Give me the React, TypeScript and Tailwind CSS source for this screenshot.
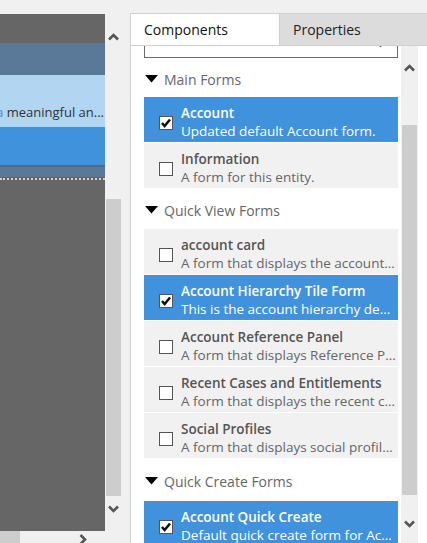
import type { ReactNode } from 'react';

const FONT = { fontFamily: '"Open Sans", "Noto Sans", Arial, sans-serif' };

type Form = { title: string; desc: string; checked?: boolean };

const mainForms: Form[] = [
  { title: 'Account', desc: 'Updated default Account form.', checked: true },
  { title: 'Information', desc: 'A form for this entity.' },
];

const quickView: Form[] = [
  { title: 'account card', desc: 'A form that displays the account information' },
  { title: 'Account Hierarchy Tile Form', desc: 'This is the account hierarchy definition form', checked: true },
  { title: 'Account Reference Panel', desc: 'A form that displays Reference Panel information' },
  { title: 'Recent Cases and Entitlements', desc: 'A form that displays the recent cases' },
  { title: 'Social Profiles', desc: 'A form that displays social profiles' },
];

const quickCreate: Form[] = [
  { title: 'Account Quick Create', desc: 'Default quick create form for Account', checked: true },
];

function Chevron({ dir }: { dir: 'up' | 'down' | 'right' }) {
  if (dir === 'right') {
    return (
      <svg width="8" height="11" viewBox="0 0 8 11">
        <path d="M1.5 1 L6 5.5 L1.5 10" fill="none" stroke="#555" strokeWidth="2.6" />
      </svg>
    );
  }
  return (
    <svg width="11" height="8" viewBox="0 0 11 8">
      <path
        d={dir === 'up' ? 'M1 6.5 L5.5 2 L10 6.5' : 'M1 1.5 L5.5 6 L10 1.5'}
        fill="none"
        stroke="#555"
        strokeWidth="2.6"
      />
    </svg>
  );
}

function Checkbox({ checked }: { checked?: boolean }) {
  return (
    <div className="flex h-[14px] w-[14px] shrink-0 items-center justify-center border border-[#555] bg-white">
      {checked && (
        <svg width="12" height="12" viewBox="0 0 12 12">
          <path d="M2 6 L4.6 9 L10 2.5" fill="none" stroke="#111" strokeWidth="2.5" />
        </svg>
      )}
    </div>
  );
}

function Row({ form }: { form: Form }) {
  return (
    <div
      className={
        form.checked
          ? 'mb-px flex h-[45px] shrink-0 items-start bg-[#4192dc] pl-[15px] pr-[2px]'
          : 'mb-px flex h-[45px] shrink-0 items-start bg-[#f1f1f1] pl-[15px] pr-[2px]'
      }
    >
      <div className="mt-[19px]">
        <Checkbox checked={form.checked} />
      </div>
      <div className="ml-[8px] min-w-0 flex-1 pt-[7px]">
        <div
          className={
            form.checked
              ? 'truncate text-[13.5px] leading-[18px] font-semibold text-white'
              : 'truncate text-[13.5px] leading-[18px] font-semibold text-[#555]'
          }
        >
          {form.title}
        </div>
        <div
          className={
            form.checked
              ? 'truncate text-[13.5px] leading-[18px] text-white'
              : 'truncate text-[13.5px] leading-[18px] text-[#666]'
          }
        >
          {form.desc}
        </div>
      </div>
    </div>
  );
}

function Section({ label, gap, children }: { label: string; gap: string; children: ReactNode }) {
  return (
    <>
      <div className={`flex h-[20px] shrink-0 items-center ${gap}`}>
        <svg width="13" height="8" viewBox="0 0 13 8" className="ml-px">
          <polygon points="0,0 13,0 6.5,7.5" fill="#000" />
        </svg>
        <span className="ml-[6px] text-[14px] text-[#666]">{label}</span>
      </div>
      {children}
    </>
  );
}

export default function App() {
  return (
    <div className="flex h-[543px] w-[427px] flex-col overflow-hidden bg-[#f0f0f0]" style={FONT}>
      <div className="h-[13px] shrink-0" />
      <div className="flex min-h-0 flex-1">
        {/* left designer canvas */}
        <div className="flex w-[130px] shrink-0 flex-col">
          <div className="flex min-h-0 flex-1 pt-px">
            <div className="flex w-[105px] flex-col overflow-hidden bg-[#666]">
              <div className="h-[29px] shrink-0" />
              <div className="h-[32px] shrink-0 bg-[#5a7898]" />
              <div className="flex h-[52px] shrink-0 items-end justify-end overflow-hidden bg-[#b2d5f2] pb-[6px] pr-px">
                <span className="shrink-0 whitespace-nowrap text-[13px] leading-[18px] text-[#333]">
                  <span className="text-[#3f8fdb]">a</span> meaningful an...
                </span>
              </div>
              <div className="h-[38px] shrink-0 bg-[#4192dc]" />
              <div className="h-[2px] shrink-0 bg-[#4d6b8a]" />
              <div className="h-[10px] shrink-0 bg-[#5a7898]" />
              <div className="mt-px h-[2px] shrink-0 border-t-2 border-dotted border-[#d0d0d0]" />
            </div>
            <div className="flex w-[17px] flex-col items-center">
              <div className="flex h-[46px] shrink-0 items-center justify-center">
                <Chevron dir="up" />
              </div>
              <div className="mt-[139px] h-[297px] w-[15px] shrink-0 bg-[#cdcdcd]" />
              <div className="flex flex-1 justify-center pt-[9px]">
                <Chevron dir="down" />
              </div>
            </div>
          </div>
          <div className="flex h-[12px] shrink-0 items-start">
            <div className="h-[12px] w-[20px] bg-[#cdcdcd]" />
            <div className="ml-[59px] mt-[3px]">
              <Chevron dir="right" />
            </div>
          </div>
        </div>

        {/* right components panel */}
        <div className="flex min-w-0 flex-1 flex-col border-t border-l border-[#d0d0d0] bg-white">
          <div className="flex h-[32px] shrink-0 border-b border-[#d0d0d0]">
            <div className="flex w-[148px] items-center bg-white pl-[13px] text-[14px] text-[#111]">
              Components
            </div>
            <div className="flex flex-1 items-center border-l border-[#cfcfcf] bg-[#dcdcdc] pl-[13px] text-[14px] text-[#222]">
              Properties
            </div>
          </div>
          <div className="flex min-h-0 flex-1">
            <div className="flex w-[267px] shrink-0 flex-col overflow-hidden pl-[13px]">
              <div className="-mt-[20px] flex h-[32px] shrink-0 items-center justify-between border border-[#6a6a6a] pb-[3px] pl-[10px] pr-[12px] text-[14px] text-[#444]">
                <span>Account</span>
                <svg width="9" height="6" viewBox="0 0 9 6" className="mt-[8px]">
                  <path d="M1 1 L4.5 4.5 L8 1" fill="none" stroke="#666" strokeWidth="1.2" />
                </svg>
              </div>
              <Section label="Main Forms" gap="mt-[11px] mb-[8px]">
                {mainForms.map((f) => (
                  <Row key={f.title} form={f} />
                ))}
              </Section>
              <Section label="Quick View Forms" gap="mt-[11px] mb-[9px]">
                {quickView.map((f) => (
                  <Row key={f.title} form={f} />
                ))}
              </Section>
              <Section label="Quick Create Forms" gap="mt-[12px] mb-[10px]">
                {quickCreate.map((f) => (
                  <Row key={f.title} form={f} />
                ))}
              </Section>
            </div>
            <div className="ml-[3px] flex w-[17px] shrink-0 flex-col items-center bg-[#f0f0f0]">
              <div className="flex h-[44px] shrink-0 items-center justify-center">
                <Chevron dir="up" />
              </div>
              <div className="mt-[35px] h-[370px] w-[15px] shrink-0 bg-[#cdcdcd]" />
              <div className="flex flex-1 justify-center pt-[25px]">
                <Chevron dir="down" />
              </div>
            </div>
          </div>
        </div>
      </div>
    </div>
  );
}
